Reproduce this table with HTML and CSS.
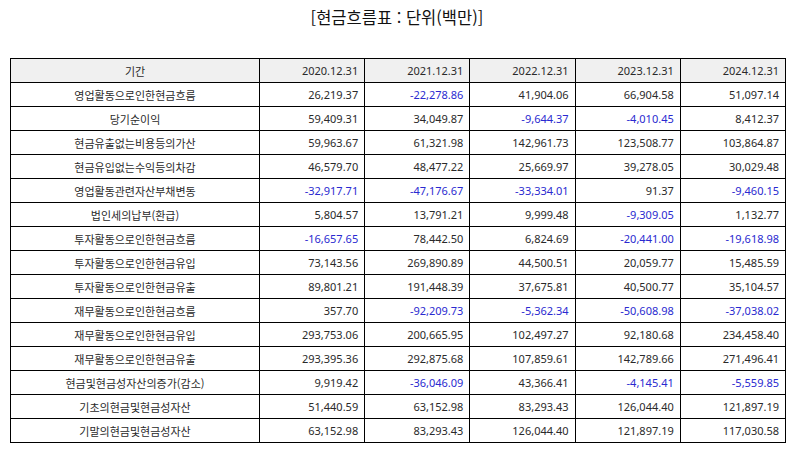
FILE: index.html
```html
<!DOCTYPE html>
<html lang="ko">
<head>
<meta charset="utf-8">
<link rel="stylesheet" href="styles.css">
</head>
<body>
<div class="wrap">
<h1 class="title">[현금흐름표 : 단위(백만)]</h1>
<table class="cf">
<colgroup><col class="c-label"><col><col><col><col><col></colgroup>
<thead>
<tr><th class="label">기간</th><th>2020.12.31</th><th>2021.12.31</th><th>2022.12.31</th><th>2023.12.31</th><th>2024.12.31</th></tr>
</thead>
<tbody>
<tr><td class="label">영업활동으로인한현금흐름</td><td>26,219.37</td><td class="neg">-22,278.86</td><td>41,904.06</td><td>66,904.58</td><td>51,097.14</td></tr>
<tr><td class="label">당기순이익</td><td>59,409.31</td><td>34,049.87</td><td class="neg">-9,644.37</td><td class="neg">-4,010.45</td><td>8,412.37</td></tr>
<tr><td class="label">현금유출없는비용등의가산</td><td>59,963.67</td><td>61,321.98</td><td>142,961.73</td><td>123,508.77</td><td>103,864.87</td></tr>
<tr><td class="label">현금유입없는수익등의차감</td><td>46,579.70</td><td>48,477.22</td><td>25,669.97</td><td>39,278.05</td><td>30,029.48</td></tr>
<tr><td class="label">영업활동관련자산부채변동</td><td class="neg">-32,917.71</td><td class="neg">-47,176.67</td><td class="neg">-33,334.01</td><td>91.37</td><td class="neg">-9,460.15</td></tr>
<tr><td class="label">법인세의납부(환급)</td><td>5,804.57</td><td>13,791.21</td><td>9,999.48</td><td class="neg">-9,309.05</td><td>1,132.77</td></tr>
<tr><td class="label">투자활동으로인한현금흐름</td><td class="neg">-16,657.65</td><td>78,442.50</td><td>6,824.69</td><td class="neg">-20,441.00</td><td class="neg">-19,618.98</td></tr>
<tr><td class="label">투자활동으로인한현금유입</td><td>73,143.56</td><td>269,890.89</td><td>44,500.51</td><td>20,059.77</td><td>15,485.59</td></tr>
<tr><td class="label">투자활동으로인한현금유출</td><td>89,801.21</td><td>191,448.39</td><td>37,675.81</td><td>40,500.77</td><td>35,104.57</td></tr>
<tr><td class="label">재무활동으로인한현금흐름</td><td>357.70</td><td class="neg">-92,209.73</td><td class="neg">-5,362.34</td><td class="neg">-50,608.98</td><td class="neg">-37,038.02</td></tr>
<tr><td class="label">재무활동으로인한현금유입</td><td>293,753.06</td><td>200,665.95</td><td>102,497.27</td><td>92,180.68</td><td>234,458.40</td></tr>
<tr><td class="label">재무활동으로인한현금유출</td><td>293,395.36</td><td>292,875.68</td><td>107,859.61</td><td>142,789.66</td><td>271,496.41</td></tr>
<tr><td class="label">현금및현금성자산의증가(감소)</td><td>9,919.42</td><td class="neg">-36,046.09</td><td>43,366.41</td><td class="neg">-4,145.41</td><td class="neg">-5,559.85</td></tr>
<tr><td class="label">기초의현금및현금성자산</td><td>51,440.59</td><td>63,152.98</td><td>83,293.43</td><td>126,044.40</td><td>121,897.19</td></tr>
<tr><td class="label">기말의현금및현금성자산</td><td>63,152.98</td><td>83,293.43</td><td>126,044.40</td><td>121,897.19</td><td>117,030.58</td></tr>
</tbody>
</table>
</div>
</body>
</html>
```
FILE: styles.css
```css
html, body {
  margin: 0;
  padding: 0;
  background: #ffffff;
}
body {
  font-family: "Noto Sans", "Noto Sans CJK KR", sans-serif;
  color: #2a2a2a;
}
.wrap {
  padding: 5px 10px 0 10px;
}
.title {
  margin: 0;
  height: 24px;
  line-height: 24px;
  text-align: center;
  font-size: 16.5px;
  font-weight: normal;
  color: #111111;
  font-family: "Noto Sans CJK KR", sans-serif;
}
.cf {
  margin-top: 29px;
  width: 776px;
  border-collapse: collapse;
  table-layout: fixed;
  font-size: 11px;
}
.c-label {
  width: 249px;
}
.cf th, .cf td {
  border: 1px solid #000000;
  height: 23px;
  padding: 0 6px;
  text-align: right;
  font-weight: normal;
  white-space: nowrap;
  line-height: 14px;
}
.cf th {
  background: #f0f0f0;
}
.cf .label {
  text-align: center;
  font-family: "Noto Sans CJK KR", sans-serif;
}
.cf .neg {
  color: #2a2ad0;
}
```
